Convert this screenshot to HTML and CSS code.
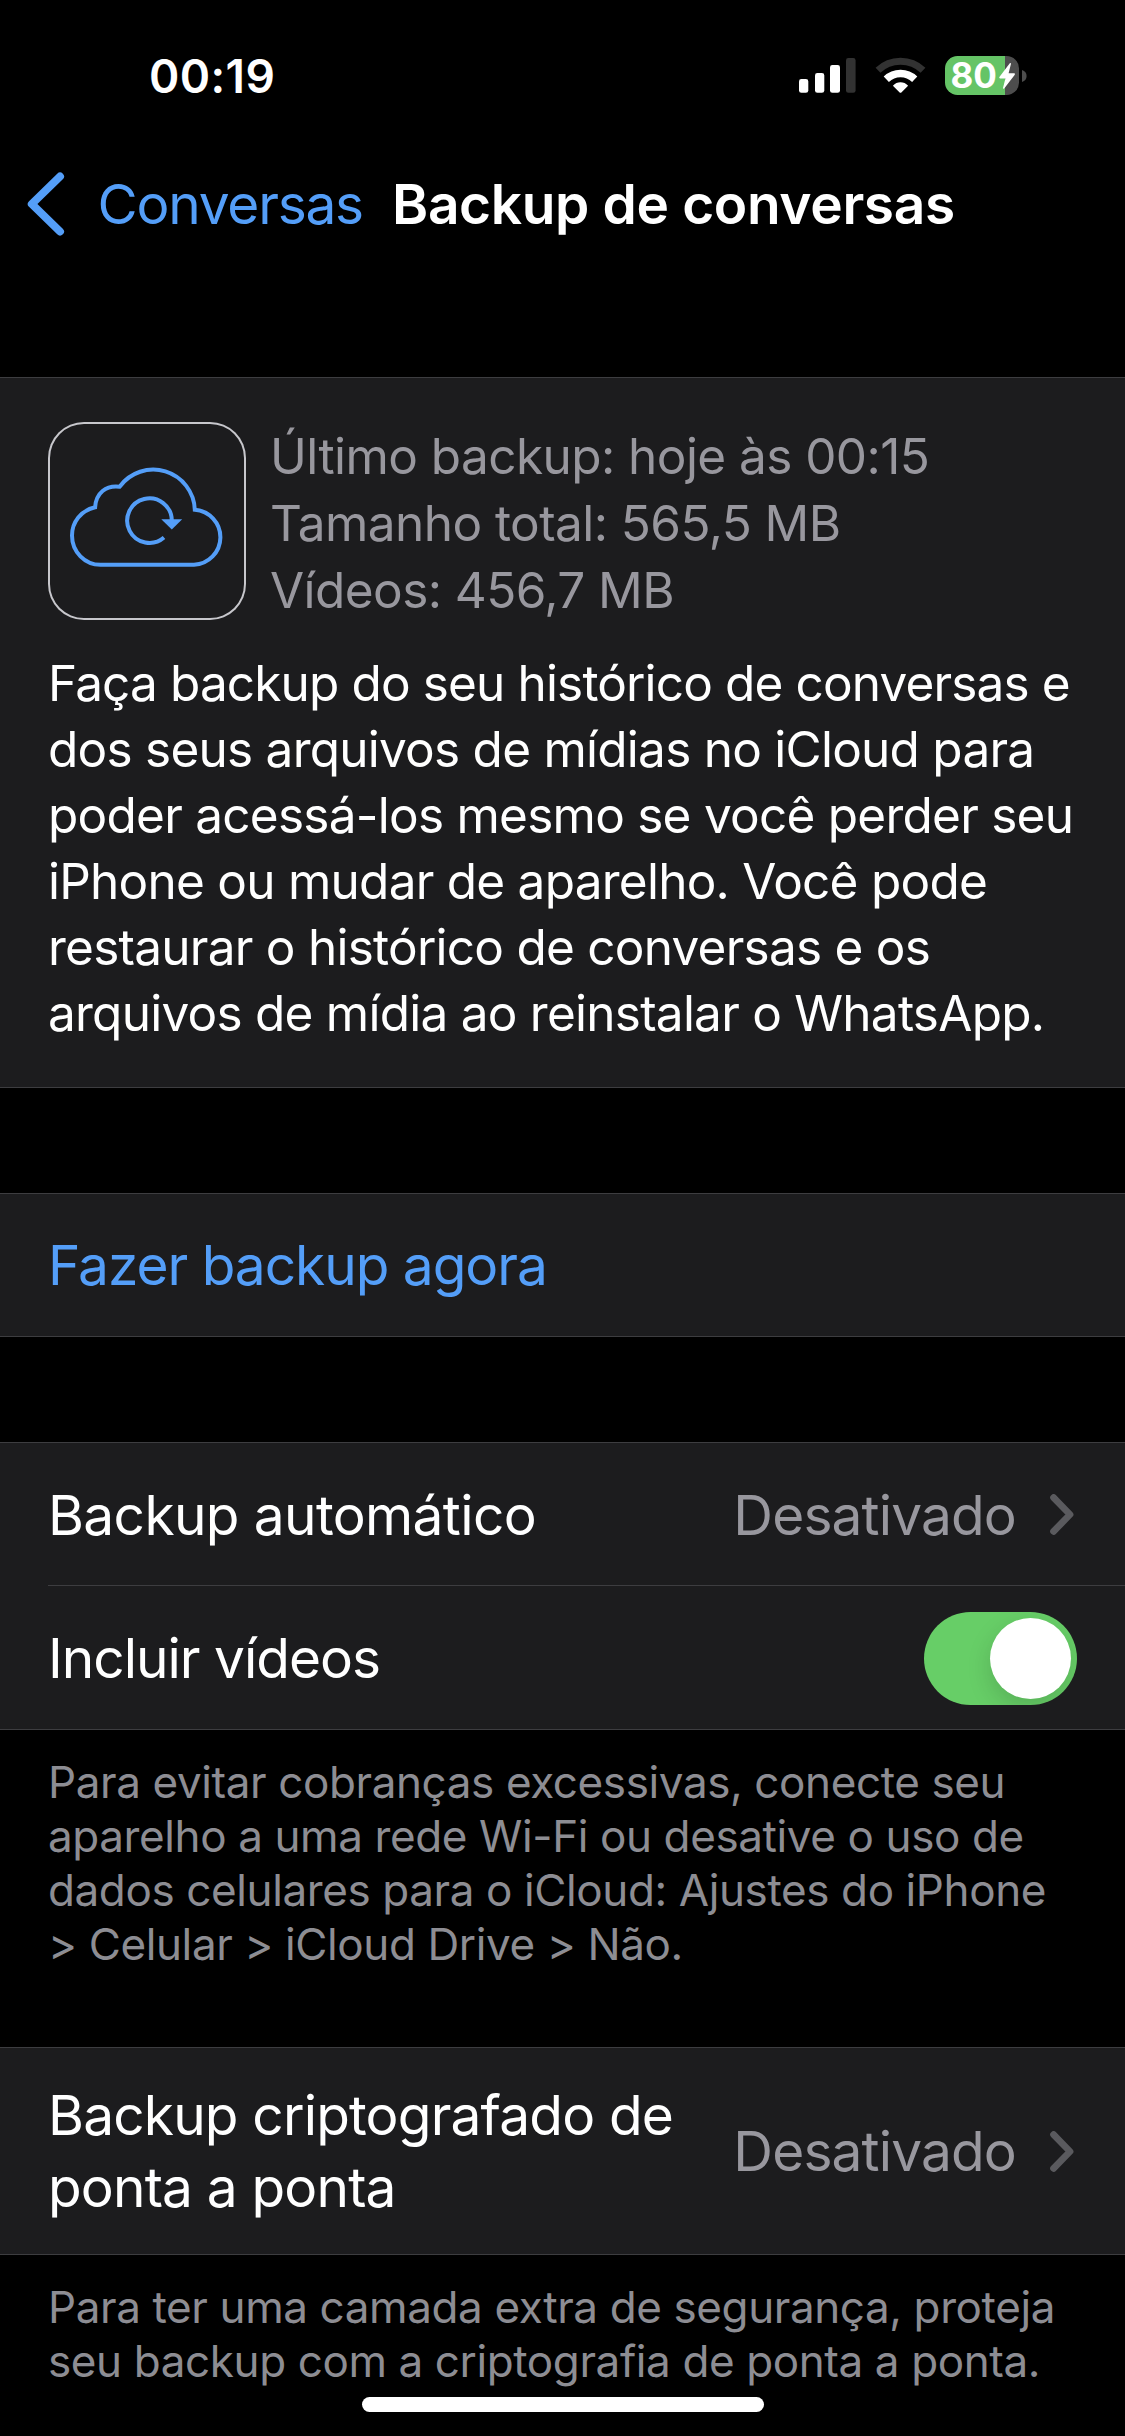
FILE: index.html
```html
<!DOCTYPE html>
<html lang="pt-BR">
<head>
<meta charset="utf-8">
<title>Backup de conversas</title>
<link rel="stylesheet" href="styles.css">
</head>
<body>
<div class="screen">
  <header class="status-bar">
    <span class="clock">00:19</span>
    <div class="status-icons">
      <svg class="signal" viewBox="799 51 58 50" aria-hidden="true">
        <rect x="799" y="79" width="9.3" height="13.8" rx="2.4"/>
        <rect x="815" y="73" width="9.3" height="19.8" rx="2.4"/>
        <rect x="830" y="65" width="10" height="27.8" rx="2.4"/>
        <rect class="dim" x="846" y="58" width="9.6" height="34.8" rx="2.4"/>
      </svg>
      <svg class="wifi" viewBox="875 51 51 50" aria-hidden="true">
        <path class="dim-stroke" d="M878 70.2A32.5 32.5 0 0 1 923 70.2"/>
        <path class="lit-stroke" d="M886.3 79.2A20.5 20.5 0 0 1 914.7 79.2"/>
        <path d="M892.9 85.7C897 81.2 904 81.2 908.1 85.7L901.6 92.2Q900.5 93.3 899.4 92.2Z"/>
      </svg>
      <div class="battery">
        <span class="battery-level">80</span>
        <svg class="bolt" viewBox="0 0 18 28" aria-hidden="true"><path d="M11.8 1.2L1.4 15.1Q.7 16.5 2.2 16.5H7.4L5 26Q5 27.2 6.2 26.5L16.8 12.7Q17.4 11.3 16 11.3H10.6L13 1.8Q12.9.4 11.8 1.2Z"/></svg>
      </div>
      <svg class="battery-cap" viewBox="0 0 5 12" aria-hidden="true"><path d="M0 0Q4.6 1.6 4.6 6T0 12Z"/></svg>
    </div>
  </header>

  <nav class="nav-bar">
    <svg class="back-icon" viewBox="0 0 38 64" aria-hidden="true"><path d="M33 4.5L4.8 32L33 59.5"/></svg>
    <a class="back-label">Conversas</a>
    <h1 class="title">Backup de conversas</h1>
  </nav>

  <main>
    <section class="card summary">
      <div class="summary-head">
        <div class="cloud-box">
          <svg viewBox="0 0 198 198" aria-hidden="true">
            <path d="M52.5 142.8H146A27.6 27.6 0 0 0 146.8 87.7A41.6 41.6 0 0 0 71.6 64.7C58 63 48 71 47.1 85.3C33 88.5 24 100 24 113.5C24 130 37 142.8 52.5 142.8Z"/>
            <path d="M116 115.6A22.3 22.3 0 1 1 123.8 98.5"/>
            <path class="arrow" d="M113.3 97.2H134.2L123.8 107.4Z"/>
          </svg>
        </div>
        <p class="meta">Último backup: hoje às 00:15<br>Tamanho total: 565,5 MB<br>Vídeos: 456,7 MB</p>
      </div>
      <p class="description"><span class="tight">Faça backup do seu histórico de conversas e</span><br>dos seus arquivos de mídias no iCloud para<br>poder acessá-los mesmo se você perder seu<br>iPhone ou mudar de aparelho. Você pode<br>restaurar o histórico de conversas e os<br>arquivos de mídia ao reinstalar o WhatsApp.</p>
    </section>

    <section class="card gap">
      <div class="row action">Fazer backup agora</div>
    </section>

    <section class="card gap">
      <div class="row">
        <span class="label auto">Backup automático</span>
        <span class="value">Desativado</span>
        <svg class="chevron" viewBox="0 0 24 41" aria-hidden="true"><path d="M3.6 3.6L20 20.5L3.6 37.4"/></svg>
      </div>
      <div class="divider"></div>
      <div class="row toggle-row">
        <span class="label include">Incluir vídeos</span>
        <span class="toggle"><span class="knob"></span></span>
      </div>
    </section>
    <p class="note">Para evitar cobranças excessivas, conecte seu<br>aparelho a uma rede Wi-Fi ou desative o uso de<br>dados celulares para o iCloud: Ajustes do iPhone<br>&gt; Celular &gt; iCloud Drive &gt; Não.</p>

    <section class="card encrypted">
      <div class="row tall">
        <span class="label">Backup criptografado de<br>ponta a ponta</span>
        <span class="value">Desativado</span>
        <svg class="chevron" viewBox="0 0 24 41" aria-hidden="true"><path d="M3.6 3.6L20 20.5L3.6 37.4"/></svg>
      </div>
    </section>
    <p class="note">Para ter uma camada extra de segurança, proteja<br>seu backup com a criptografia de ponta a ponta.</p>
  </main>
  <div class="home-indicator"></div>
</div>
</body>
</html>
```
FILE: styles.css
```css
* { box-sizing: border-box; }
body {
  margin: 0;
  background: #000;
  color: #fff;
  font-family: Inter, "Liberation Sans", sans-serif;
}
h1, p { margin: 0; }
svg { display: block; flex: none; }

.screen {
  position: relative;
  width: 1125px;
  height: 2436px;
  overflow: hidden;
  background: #000;
  white-space: nowrap;
}

/* Status bar */
.status-bar {
  display: flex;
  align-items: center;
  justify-content: space-between;
  height: 152px;
  padding: 0 98px 0 149px;
}
.clock { font-size: 46px; font-weight: 600; letter-spacing: 0.4px; }
.status-icons { display: flex; align-items: center; }
.signal { width: 58px; height: 50px; fill: #fff; }
.wifi { width: 51px; height: 50px; margin-left: 18px; fill: #fff; }
.dim { fill: #323232; }
.dim-stroke { fill: none; stroke: #323232; stroke-width: 7; }
.lit-stroke { fill: none; stroke: #fff; stroke-width: 7.5; }
.battery {
  display: flex;
  align-items: center;
  width: 74px;
  height: 39px;
  margin: 0 3px 1px 19.5px;
  padding-left: 5.5px;
  border-radius: 12.5px;
  background: linear-gradient(90deg, #65c466 60px, #4d4d4d 60px);
}
.battery-level { font-size: 35px; font-weight: 700; line-height: 39px; }
.bolt { width: 18px; height: 28px; margin-left: 1px; fill: #fff; }
.battery-cap { width: 5px; height: 12px; fill: #4d4d4d; }

/* Navigation bar */
.nav-bar {
  display: flex;
  align-items: center;
  height: 104px;
  padding-left: 27px;
  font-size: 55px;
  line-height: 66px;
}
.back-icon {
  width: 38px;
  height: 64px;
  fill: none;
  stroke: #549ef8;
  stroke-width: 8;
  stroke-linecap: round;
  stroke-linejoin: round;
}
.back-label { width: 262px; margin-left: 32.5px; color: #549ef8; letter-spacing: -1.22px; }
.title { margin-left: 32.5px; font-size: 55px; font-weight: 600; letter-spacing: -0.36px; }

/* Grouped cards */
.card {
  background: #1c1c1e;
  border-top: 1px solid #3d3d40;
  border-bottom: 1px solid #3d3d40;
}
.gap { margin-top: 105px; }

.summary { height: 711px; margin-top: 121px; padding: 44px 48px 0; }
.summary-head { display: flex; gap: 24px; height: 201px; }
.cloud-box {
  width: 198px;
  height: 198px;
  border-radius: 36px;
  box-shadow: inset 0 0 0 2px #c7c7cc;
}
.cloud-box svg {
  width: 198px;
  height: 198px;
  fill: none;
  stroke: #549ef8;
  stroke-width: 4;
}
.cloud-box .arrow { fill: #549ef8; stroke: none; }
.meta { padding-top: 1px; color: #98979e; font-size: 49.5px; line-height: 67px; letter-spacing: -0.56px; }
.description { margin-top: 27px; font-size: 49.5px; line-height: 66px; letter-spacing: -0.75px; }
.tight { letter-spacing: -0.86px; }

.row {
  display: flex;
  align-items: center;
  height: 142px;
  padding: 1px 51px 0 48px;
  font-size: 55px;
  line-height: 72px;
}
.action { color: #549ef8; letter-spacing: -1.03px; padding-top: 0; }
.label { flex: 1; letter-spacing: -0.83px; }
.auto { letter-spacing: -0.63px; }
.include { letter-spacing: -1px; }
.value { color: #98979e; letter-spacing: -0.85px; margin-right: 34px; }
.chevron {
  width: 24px;
  height: 41px;
  fill: none;
  stroke: #5a5a5e;
  stroke-width: 6.8;
  stroke-linecap: round;
  stroke-linejoin: round;
}
.divider { height: 1px; margin-left: 48px; background: #3d3d40; }
.toggle-row { height: 143px; padding-right: 48px; }
.toggle {
  display: flex;
  justify-content: flex-end;
  width: 153px;
  height: 93px;
  padding: 6px;
  border-radius: 47px;
  background: #67ce67;
  overflow: hidden;
}
.knob {
  width: 81px;
  height: 81px;
  border-radius: 50%;
  background: #fff;
  box-shadow: 0 9px 24px rgba(0, 0, 0, 0.15);
}
.tall { height: 206px; padding-top: 0; }

.note {
  padding: 25px 48px 0;
  color: #8d8d93;
  font-size: 44px;
  line-height: 54px;
  letter-spacing: -0.39px;
}
.encrypted { margin-top: 76px; }

/* Floats above the scrolled content */
.home-indicator {
  position: absolute;
  left: 362px;
  bottom: 24px;
  width: 402px;
  height: 15px;
  border-radius: 8px;
  background: #fff;
}
```
